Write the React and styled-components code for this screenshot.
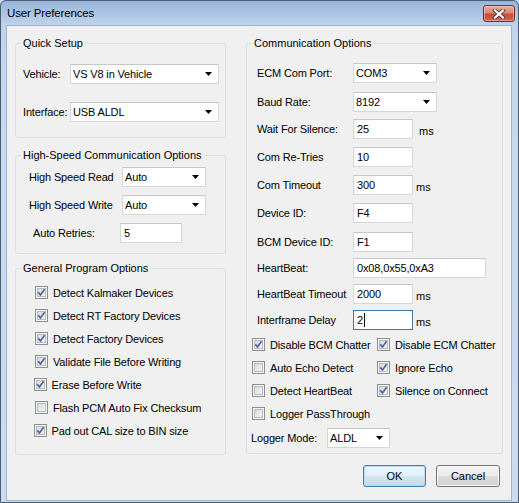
import React from "react";
import styled, { createGlobalStyle } from "styled-components";

const GlobalStyle = createGlobalStyle`
  html, body { margin: 0; padding: 0; background: #c6d9ee; }
  body { font-family: "Liberation Sans", Arial, sans-serif; font-size: 11px; color: #000; }
  * { box-sizing: border-box; }
`;

const Window = styled.div`
  width: 519px;
  height: 503px;
  border: 1px solid #4a5d75;
  border-radius: 6px 6px 0 0;
  background: linear-gradient(to bottom, #97b5d9 0px, #bfd3eb 24px, #c5d8ee 70px, #cbdcf0 100%);
  display: flex;
  flex-direction: column;
  overflow: hidden;
`;

const TitleBar = styled.div`
  height: 24px;
  flex: none;
  display: flex;
  align-items: flex-start;
  justify-content: space-between;
  padding: 0 3px 0 6px;
`;

const Title = styled.span`
  margin-top: 6px;
  font-size: 11.5px;
  letter-spacing: -0.15px;
  line-height: 13px;
  color: #000;
`;

const CloseButton = styled.div`
  margin-top: 4px;
  width: 32px;
  height: 17px;
  border: 1px solid #7a2e22;
  border-radius: 3px;
  background: linear-gradient(to bottom, #e8ab9b 0%, #d98a76 45%, #c74e34 55%, #d0654a 100%);
  box-shadow: inset 0 0 0 1px rgba(255, 220, 210, 0.45);
  display: flex;
  align-items: center;
  justify-content: center;
`;

const Client = styled.div`
  flex: 1;
  margin: 0 6px 1px 5px;
  border: 1px solid #9fb3cb;
  background: #f0f0f0;
  padding: 11px 8px 0 8px;
  display: flex;
  flex-direction: column;
`;

const Columns = styled.div`
  display: flex;
  gap: 20px;
  align-items: flex-start;
`;

const Column = styled.div`
  width: ${(p) => p.$w}px;
  display: flex;
  flex-direction: column;
`;

const Group = styled.fieldset`
  margin: ${(p) => p.$mt || 0}px 0 0 0;
  padding: 0;
  min-width: 0;
  border: 1px solid #d5dfe5;
  border-radius: 3px;
`;

const Caption = styled.legend`
  margin-left: 5px;
  padding: 0 2px;
  line-height: 13px;
  font-size: 11px;
`;

const GroupBody = styled.div`
  padding: ${(p) => p.$pt || 0}px 0 ${(p) => p.$pb || 0}px ${(p) => p.$pl || 0}px;
  display: flex;
  flex-direction: column;
`;

const FieldRow = styled.div`
  display: flex;
  align-items: center;
  height: 20px;
  margin-top: ${(p) => p.$mt || 0}px;
`;

const Label = styled.span`
  flex: none;
  width: ${(p) => p.$w}px;
  margin-left: ${(p) => p.$ml || 0}px;
  white-space: nowrap;
  letter-spacing: -0.15px;
`;

const Combo = styled.div`
  flex: none;
  width: ${(p) => p.$w}px;
  height: 20px;
  background: #fff;
  border: 1px solid #d4d7db;
  border-top-color: #c4c7cc;
  display: flex;
  align-items: center;
  justify-content: space-between;
  padding: 0 6px 0 2px;
  letter-spacing: -0.15px;
`;

const TextBox = styled.div`
  flex: none;
  width: ${(p) => p.$w}px;
  height: 20px;
  background: #fff;
  border: 1px solid ${(p) => (p.$focus ? "#3d7bad" : "#d4d7db")};
  border-top-color: ${(p) => (p.$focus ? "#3d7bad" : "#c4c7cc")};
  display: flex;
  align-items: center;
  padding: 0 3px;
  letter-spacing: -0.15px;
  white-space: nowrap;
`;

const Caret = styled.span`
  display: inline-block;
  width: 1px;
  height: 14px;
  background: #000;
  margin-left: 1px;
`;

const Unit = styled.span`
  margin-left: ${(p) => p.$ml}px;
  padding-top: 3px;
`;

const CheckList = styled.div`
  display: grid;
  grid-template-columns: ${(p) => p.$cols};
  grid-auto-rows: 23px;
  padding-left: ${(p) => p.$pl}px;
  margin-top: ${(p) => p.$mt || 0}px;
`;

const CheckItem = styled.div`
  display: flex;
  align-items: center;
  gap: 5px;
  margin-left: ${(p) => p.$nudge || 0}px;
  white-space: nowrap;
  letter-spacing: -0.15px;
`;

const Box = styled.span`
  flex: none;
  width: 13px;
  height: 13px;
  border: 1px solid #8e8f8f;
  background: #f5f5f5;
  display: flex;
  align-items: center;
  justify-content: center;
`;

const BoxInner = styled.span`
  width: 9px;
  height: 9px;
  border: 1px solid #b9bcc1;
  background: linear-gradient(135deg, #d6d8dc 0%, #e8e9eb 55%, #f4f4f4 100%);
  display: flex;
  align-items: center;
  justify-content: center;
  overflow: visible;
`;

const ButtonRow = styled.div`
  display: flex;
  justify-content: flex-end;
  gap: 10px;
  margin-top: 11px;
  margin-right: 3px;
`;

const Button = styled.div`
  width: ${(p) => p.$w}px;
  height: 22px;
  border: 1px solid ${(p) => (p.$default ? "#3c7fb1" : "#707070")};
  border-radius: 3px;
  background: ${(p) =>
    p.$default
      ? "linear-gradient(to bottom, #eef6fb 0%, #e3eff7 50%, #d2e5f2 51%, #c3dbec 100%)"
      : "linear-gradient(to bottom, #f2f2f2 0%, #ebebeb 50%, #dddddd 51%, #cfcfcf 100%)"};
  box-shadow: inset 0 0 0 1px ${(p) => (p.$default ? "#b6dcf2" : "#fcfcfc")};
  display: flex;
  align-items: center;
  justify-content: center;
  font-size: 11px;
`;

const Arrow = () => (
  <svg width="7" height="4" viewBox="0 0 7 4">
    <polygon points="0,0 7,0 3.5,4" fill="#000" />
  </svg>
);

const CheckMark = () => (
  <svg width="9" height="9" viewBox="0 0 9 9" style={{ overflow: "visible" }}>
    <path d="M1.3 4.4 L3.5 6.9 L7.6 1.2" fill="none" stroke="#4a60a0" strokeWidth="1.6" strokeLinejoin="miter" />
  </svg>
);

const CloseGlyph = () => (
  <svg width="14" height="10" viewBox="0 0 14 10">
    <path d="M3 1.5 L11 8.5 M11 1.5 L3 8.5" stroke="#5a3a35" strokeWidth="4" strokeLinecap="square" />
    <path d="M3 1.5 L11 8.5 M11 1.5 L3 8.5" stroke="#ffffff" strokeWidth="2.2" strokeLinecap="square" />
  </svg>
);

const Check = ({ checked, label, nudge }) => (
  <CheckItem $nudge={nudge}>
    <Box>
      <BoxInner>{checked && <CheckMark />}</BoxInner>
    </Box>
    <span>{label}</span>
  </CheckItem>
);

const commRows = [
  { label: "ECM Com Port:", combo: true, value: "COM3", w: 84, mt: 13 },
  { label: "Baud Rate:", combo: true, value: "8192", w: 84, mt: 9 },
  { label: "Wait For Silence:", value: "25", w: 60, unit: 6, mt: 7 },
  { label: "Com Re-Tries", value: "10", w: 60, mt: 8 },
  { label: "Com Timeout", value: "300", w: 60, unit: 3, mt: 8 },
  { label: "Device ID:", value: "F4", w: 60, mt: 8 },
  { label: "BCM Device ID:", value: "F1", w: 60, mt: 9 },
  { label: "HeartBeat:", value: "0x08,0x55,0xA3", w: 133, mt: 6 },
  { label: "HeartBeat Timeout", value: "2000", w: 60, unit: 3, mt: 6 },
  { label: "Interframe Delay", value: "2", w: 60, unit: 3, mt: 6, focus: true },
];

const generalChecks = [
  { label: "Detect Kalmaker Devices", checked: true },
  { label: "Detect RT Factory Devices", checked: true },
  { label: "Detect Factory Devices", checked: true },
  { label: "Validate File Before Writing", checked: true },
  { label: "Erase Before Write", checked: true, nudge: -1.5 },
  { label: "Flash PCM Auto Fix Checksum", checked: false },
  { label: "Pad out CAL size to BIN size", checked: true, nudge: -1.5 },
];

const commChecks = [
  { label: "Disable BCM Chatter", checked: true },
  { label: "Disable ECM Chatter", checked: true },
  { label: "Auto Echo Detect", checked: false },
  { label: "Ignore Echo", checked: true },
  { label: "Detect HeartBeat", checked: false },
  { label: "Silence on Connect", checked: true },
  { label: "Logger PassThrough", checked: false },
];

export default function App() {
  return (
    <>
      <GlobalStyle />
      <Window>
        <TitleBar>
          <Title>User Preferences</Title>
          <CloseButton>
            <CloseGlyph />
          </CloseButton>
        </TitleBar>
        <Client>
          <Columns>
            <Column $w={211}>
              <Group>
                <Caption>Quick Setup</Caption>
                <GroupBody $pt={14} $pb={15}>
                  <FieldRow>
                    <Label $ml={7} $w={47}>Vehicle:</Label>
                    <Combo $w={149}>
                      <span>VS V8 in Vehicle</span>
                      <Arrow />
                    </Combo>
                  </FieldRow>
                  <FieldRow $mt={18}>
                    <Label $ml={7} $w={47}>Interface:</Label>
                    <Combo $w={149}>
                      <span>USB ALDL</span>
                      <Arrow />
                    </Combo>
                  </FieldRow>
                </GroupBody>
              </Group>

              <Group $mt={11}>
                <Caption>High-Speed Communication Options</Caption>
                <GroupBody $pt={5} $pb={10}>
                  <FieldRow>
                    <Label $ml={13} $w={93}>High Speed Read</Label>
                    <Combo $w={84}>
                      <span>Auto</span>
                      <Arrow />
                    </Combo>
                  </FieldRow>
                  <FieldRow $mt={8}>
                    <Label $ml={13} $w={93}>High Speed Write</Label>
                    <Combo $w={84}>
                      <span>Auto</span>
                      <Arrow />
                    </Combo>
                  </FieldRow>
                  <FieldRow $mt={8}>
                    <Label $ml={17} $w={87}>Auto Retries:</Label>
                    <TextBox $w={62}>5</TextBox>
                  </FieldRow>
                </GroupBody>
              </Group>

              <Group $mt={8}>
                <Caption>General Program Options</Caption>
                <GroupBody $pt={6} $pb={12}>
                  <CheckList $cols="1fr" $pl={19}>
                    {generalChecks.map((c) => (
                      <Check key={c.label} {...c} />
                    ))}
                  </CheckList>
                </GroupBody>
              </Group>
            </Column>

            <Column $w={257}>
              <Group>
                <Caption>Communication Options</Caption>
                <GroupBody $pb={5}>
                  {commRows.map((r) => (
                    <FieldRow key={r.label} $mt={r.mt}>
                      <Label $ml={10} $w={96}>{r.label}</Label>
                      {r.combo ? (
                        <Combo $w={r.w}>
                          <span>{r.value}</span>
                          <Arrow />
                        </Combo>
                      ) : (
                        <TextBox $w={r.w} $focus={r.focus}>
                          {r.value}
                          {r.focus && <Caret />}
                        </TextBox>
                      )}
                      {r.unit && <Unit $ml={r.unit}>ms</Unit>}
                    </FieldRow>
                  ))}
                  <CheckList $cols="125px 1fr" $pl={5} $mt={3}>
                    {commChecks.map((c) => (
                      <Check key={c.label} {...c} />
                    ))}
                  </CheckList>
                  <FieldRow $mt={3}>
                    <Label $ml={4} $w={76}>Logger Mode:</Label>
                    <Combo $w={63}>
                      <span>ALDL</span>
                      <Arrow />
                    </Combo>
                  </FieldRow>
                </GroupBody>
              </Group>
              <ButtonRow>
                <Button $w={63} $default>OK</Button>
                <Button $w={64}>Cancel</Button>
              </ButtonRow>
            </Column>
          </Columns>
        </Client>
      </Window>
    </>
  );
}
